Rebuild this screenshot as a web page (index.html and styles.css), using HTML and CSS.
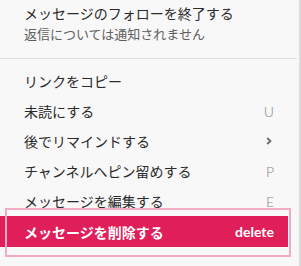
FILE: index.html
```html
<!DOCTYPE html>
<html lang="ja">
<head>
    <meta charset="UTF-8">
    <title>メッセージメニュー</title>
    <link rel="stylesheet" href="styles.css">
</head>
<body>
    <div class="menu">
        <div class="menu-head">
            <div class="head-title">メッセージのフォローを終了する</div>
            <div class="head-sub">返信については通知されません</div>
        </div>
        <div class="divider"></div>
        <ul class="menu-list">
            <li class="menu-item"><span>リンクをコピー</span></li>
            <li class="menu-item"><span>未読にする</span><span class="key">U</span></li>
            <li class="menu-item">
                <span>後でリマインドする</span>
                <svg class="chevron" width="6" height="8" viewBox="0 0 6 8">
                    <polyline points="1.2,1 4.4,4 1.2,7" fill="none" stroke="#6b6b6b" stroke-width="1.8"/>
                </svg>
            </li>
            <li class="menu-item"><span>チャンネルへピン留めする</span><span class="key">P</span></li>
            <li class="menu-item"><span>メッセージを編集する</span><span class="key">E</span></li>
            <li class="menu-item danger"><span>メッセージを削除する</span><span class="key">delete</span></li>
        </ul>
        <div class="callout"></div>
    </div>
</body>
</html>
```

FILE: styles.css
```css
body {
    margin: 0;
    background-color: #f8f8f8;
    font-family: Lato, "Noto Sans CJK JP", sans-serif;
}

.menu {
    position: relative;
    width: 299px;
    height: 266px;
    border-right: 2px solid #dcdcdc;
    background-color: #f8f8f8;
    color: #2a2a2a;
}

.menu-head {
    padding: 4px 24px 0;
    height: 58px;
    box-sizing: border-box;
}

.head-title {
    font-size: 14px;
    line-height: 20px;
}

.head-sub {
    font-size: 13px;
    line-height: 20px;
    color: #616061;
}

.divider {
    height: 1px;
    background-color: #dddddd;
    margin-right: 2px;
}

.menu-list {
    list-style: none;
    margin: 7px 11px 0 0;
    padding: 0;
}

.menu-item {
    display: flex;
    justify-content: space-between;
    align-items: center;
    height: 30px;
    padding: 0 14px 0 24px;
    font-size: 14px;
}

.key {
    font-size: 14px;
    color: #868686;
    font-weight: 300;
}

.chevron {
    margin-right: 2px;
}

.menu-item.danger {
    height: 31px;
    background-color: #e01e5a;
    color: #ffffff;
    font-weight: bold;
}

.menu-item.danger .key {
    color: #ffffff;
    font-weight: bold;
}

.callout {
    position: absolute;
    left: 5px;
    top: 208px;
    width: 282px;
    height: 45px;
    border: 2px solid #f4aac7;
}
```
